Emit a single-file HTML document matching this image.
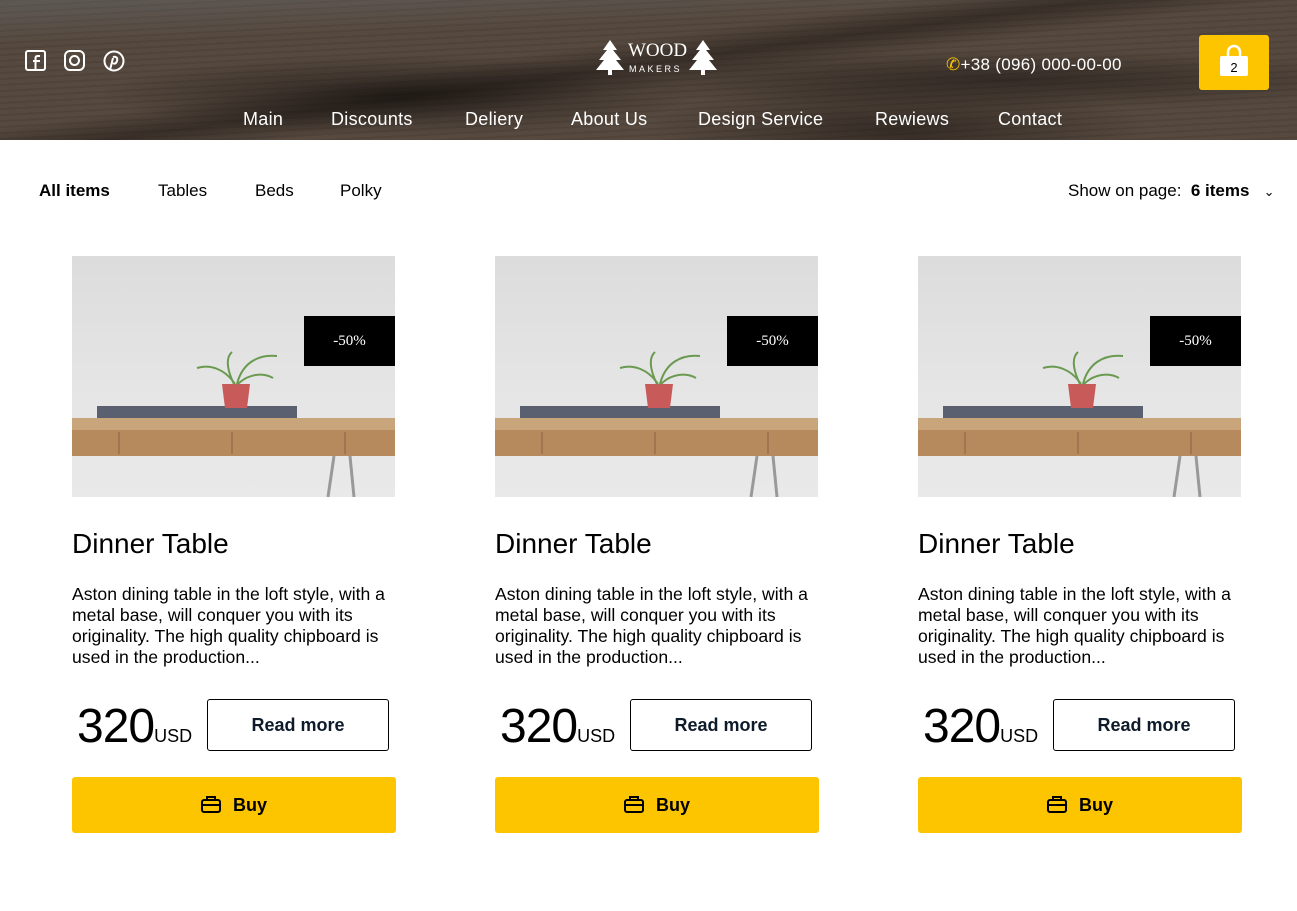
<!DOCTYPE html>
<html><head><meta charset="utf-8"><style>
*{margin:0;padding:0;box-sizing:border-box}
body{width:1297px;height:911px;background:#fff;font-family:"Liberation Sans",sans-serif;position:relative;overflow:hidden;color:#000}
.hdr{position:absolute;left:0;top:0;width:1297px;height:140px;background:
radial-gradient(ellipse 300px 40px at 400px 95px,rgba(15,12,10,.6),transparent),
radial-gradient(ellipse 400px 30px at 1000px 80px,rgba(15,12,10,.5),transparent),
radial-gradient(ellipse 250px 50px at 900px 130px,rgba(20,15,12,.5),transparent),
linear-gradient(172deg,transparent 40%,rgba(20,15,12,.45) 48%,transparent 56%),
linear-gradient(178deg,rgba(110,120,125,.35) 0%,transparent 25%),
repeating-linear-gradient(177deg,rgba(0,0,0,.08) 0 2px,transparent 2px 6px),
#56493f;}
.hdr .a{position:absolute;color:#fff;font-size:18px}
.nav{position:absolute;top:109px;color:#fff;font-size:18px;letter-spacing:.3px}
.cart{position:absolute;left:1199px;top:35px;width:70px;height:55px;background:#fdc500;border-radius:3px}
.tabs{position:absolute;top:181px;font-size:17px}
.card{position:absolute;top:256px;width:325px}
.img{width:323px;height:241px;background:linear-gradient(#dcdcdc,#e6e6e6 60%,#e9e9e9);position:relative;overflow:hidden}
.badge{position:absolute;left:232px;top:60px;width:91px;height:50px;background:#000;color:#fff;font-family:"Liberation Serif",serif;font-size:15px;text-align:center;line-height:50px}
h2{position:absolute;top:272px;left:0;font-weight:400;font-size:28px}
.d{position:absolute;top:328px;left:0;font-size:17.6px;line-height:21px;width:340px}
.p{position:absolute;top:443px;left:5px;font-size:48px;letter-spacing:-1px}
.p span{font-size:18px;letter-spacing:0}
.rm{position:absolute;left:135px;top:443px;width:182px;height:52px;border:1px solid #000;border-radius:3px;text-align:center;line-height:50px;font-weight:700;font-size:18px;color:#0d1b2a}
.buy{position:absolute;left:0;top:521px;width:324px;height:56px;background:#fdc500;border-radius:3px;text-align:center;line-height:56px;font-weight:700;font-size:18px}
</style></head><body>
<div class="hdr">
<svg style="position:absolute;left:25px;top:50px" width="102" height="22" viewBox="0 0 102 22" fill="none" stroke="#fff" stroke-width="2"><rect x="1" y="1" width="19" height="19" rx="2"/><path d="M15 6h-2.5c-1.5 0-2 1-2 2.5V20M8 11h7"/><rect x="40" y="1" width="19" height="19" rx="5"/><circle cx="49.5" cy="10.5" r="4.5"/><circle cx="89" cy="11" r="9.5"/><path d="M88 7c3-1 5 1 4 4s-3 3-4 2M88 8l-3 12"/></svg>
<div class="a" style="left:595px;top:38px;width:125px;height:40px">
<svg width="125" height="40" viewBox="0 0 125 40" fill="#fff"><path d="M15 2l-7 10h4l-8 10h5L1 32h12v5h4v-5h12l-8-10h5l-8-10h4z"/><path d="M108 2l-7 10h4l-8 10h5l-8 10h12v5h4v-5h12l-8-10h5l-8-10h4z"/><text x="33" y="18" font-family="Liberation Serif" font-size="19">WOOD</text><text x="34" y="34" font-family="Liberation Sans" font-size="9" letter-spacing="2.5">MAKERS</text></svg></div>
<div class="a" style="left:946px;top:55px;font-size:17px;letter-spacing:.3px"><span style="color:#fdc500">✆</span>+38 (096) 000-00-00</div>
<div class="cart"><svg style="position:absolute;left:20px;top:9px" width="30" height="33" viewBox="0 0 30 33"><path d="M9 12V8a6 6 0 0112 0v4" fill="none" stroke="#fff" stroke-width="2.5"/><rect x="1" y="12" width="28" height="20" rx="2" fill="#fff"/><text x="15" y="28" text-anchor="middle" font-size="13" font-family="Liberation Sans">2</text></svg></div>
<div class="nav" style="left:243px">Main</div>
<div class="nav" style="left:331px">Discounts</div>
<div class="nav" style="left:465px">Deliery</div>
<div class="nav" style="left:571px">About Us</div>
<div class="nav" style="left:698px">Design Service</div>
<div class="nav" style="left:875px">Rewiews</div>
<div class="nav" style="left:998px">Contact</div>
</div>
<div class="tabs" style="left:39px;font-weight:700">All items</div>
<div class="tabs" style="left:158px">Tables</div>
<div class="tabs" style="left:255px">Beds</div>
<div class="tabs" style="left:340px">Polky</div>
<div class="tabs" style="left:1068px">Show on page: &nbsp;<b>6 items</b> &nbsp;&nbsp;<span style="font-size:13px">⌄</span></div>

<div class="card" style="left:72px"><div class="img"><svg width="323" height="241" style="position:absolute;left:0;top:0"><rect x="25" y="150" width="200" height="14" fill="#5a6070"/><rect x="0" y="162" width="323" height="12" fill="#c9a57c"/><rect x="0" y="174" width="323" height="26" fill="#b78a5e"/><line x1="47" y1="176" x2="47" y2="198" stroke="#8a6040"/><line x1="160" y1="176" x2="160" y2="198" stroke="#8a6040"/><line x1="273" y1="176" x2="273" y2="198" stroke="#8a6040"/><path d="M262 200l-6 41M278 200l4 41" stroke="#999" stroke-width="3"/><path d="M150 128h28l-3 24h-22z" fill="#c85a5a"/><path d="M163 128c-10-15-25-20-38-16M165 128c5-20 20-30 40-28M162 128c-5-10-10-25-2-32M166 128c10-10 25-12 35-6" stroke="#6a9a50" stroke-width="2" fill="none"/></svg><div class="badge">-50%</div></div>
<h2>Dinner Table</h2><div class="d">Aston dining table in the loft style, with a metal base, will conquer you with its originality. The high quality chipboard is used in the production...</div>
<div class="p">320<span>USD</span></div><div class="rm">Read more</div>
<div class="buy"><svg width="20" height="18" viewBox="0 0 20 18" style="vertical-align:-2px;margin-right:12px" fill="none" stroke="#000" stroke-width="2"><rect x="1" y="5" width="18" height="12" rx="2"/><path d="M6 5V2h8v3M1 10h18"/></svg>Buy</div></div>

<div class="card" style="left:495px"><div class="img"><svg width="323" height="241" style="position:absolute;left:0;top:0"><rect x="25" y="150" width="200" height="14" fill="#5a6070"/><rect x="0" y="162" width="323" height="12" fill="#c9a57c"/><rect x="0" y="174" width="323" height="26" fill="#b78a5e"/><line x1="47" y1="176" x2="47" y2="198" stroke="#8a6040"/><line x1="160" y1="176" x2="160" y2="198" stroke="#8a6040"/><line x1="273" y1="176" x2="273" y2="198" stroke="#8a6040"/><path d="M262 200l-6 41M278 200l4 41" stroke="#999" stroke-width="3"/><path d="M150 128h28l-3 24h-22z" fill="#c85a5a"/><path d="M163 128c-10-15-25-20-38-16M165 128c5-20 20-30 40-28M162 128c-5-10-10-25-2-32M166 128c10-10 25-12 35-6" stroke="#6a9a50" stroke-width="2" fill="none"/></svg><div class="badge">-50%</div></div>
<h2>Dinner Table</h2><div class="d">Aston dining table in the loft style, with a metal base, will conquer you with its originality. The high quality chipboard is used in the production...</div>
<div class="p">320<span>USD</span></div><div class="rm">Read more</div>
<div class="buy"><svg width="20" height="18" viewBox="0 0 20 18" style="vertical-align:-2px;margin-right:12px" fill="none" stroke="#000" stroke-width="2"><rect x="1" y="5" width="18" height="12" rx="2"/><path d="M6 5V2h8v3M1 10h18"/></svg>Buy</div></div>

<div class="card" style="left:918px"><div class="img"><svg width="323" height="241" style="position:absolute;left:0;top:0"><rect x="25" y="150" width="200" height="14" fill="#5a6070"/><rect x="0" y="162" width="323" height="12" fill="#c9a57c"/><rect x="0" y="174" width="323" height="26" fill="#b78a5e"/><line x1="47" y1="176" x2="47" y2="198" stroke="#8a6040"/><line x1="160" y1="176" x2="160" y2="198" stroke="#8a6040"/><line x1="273" y1="176" x2="273" y2="198" stroke="#8a6040"/><path d="M262 200l-6 41M278 200l4 41" stroke="#999" stroke-width="3"/><path d="M150 128h28l-3 24h-22z" fill="#c85a5a"/><path d="M163 128c-10-15-25-20-38-16M165 128c5-20 20-30 40-28M162 128c-5-10-10-25-2-32M166 128c10-10 25-12 35-6" stroke="#6a9a50" stroke-width="2" fill="none"/></svg><div class="badge">-50%</div></div>
<h2>Dinner Table</h2><div class="d">Aston dining table in the loft style, with a metal base, will conquer you with its originality. The high quality chipboard is used in the production...</div>
<div class="p">320<span>USD</span></div><div class="rm">Read more</div>
<div class="buy"><svg width="20" height="18" viewBox="0 0 20 18" style="vertical-align:-2px;margin-right:12px" fill="none" stroke="#000" stroke-width="2"><rect x="1" y="5" width="18" height="12" rx="2"/><path d="M6 5V2h8v3M1 10h18"/></svg>Buy</div></div>
</body></html>
